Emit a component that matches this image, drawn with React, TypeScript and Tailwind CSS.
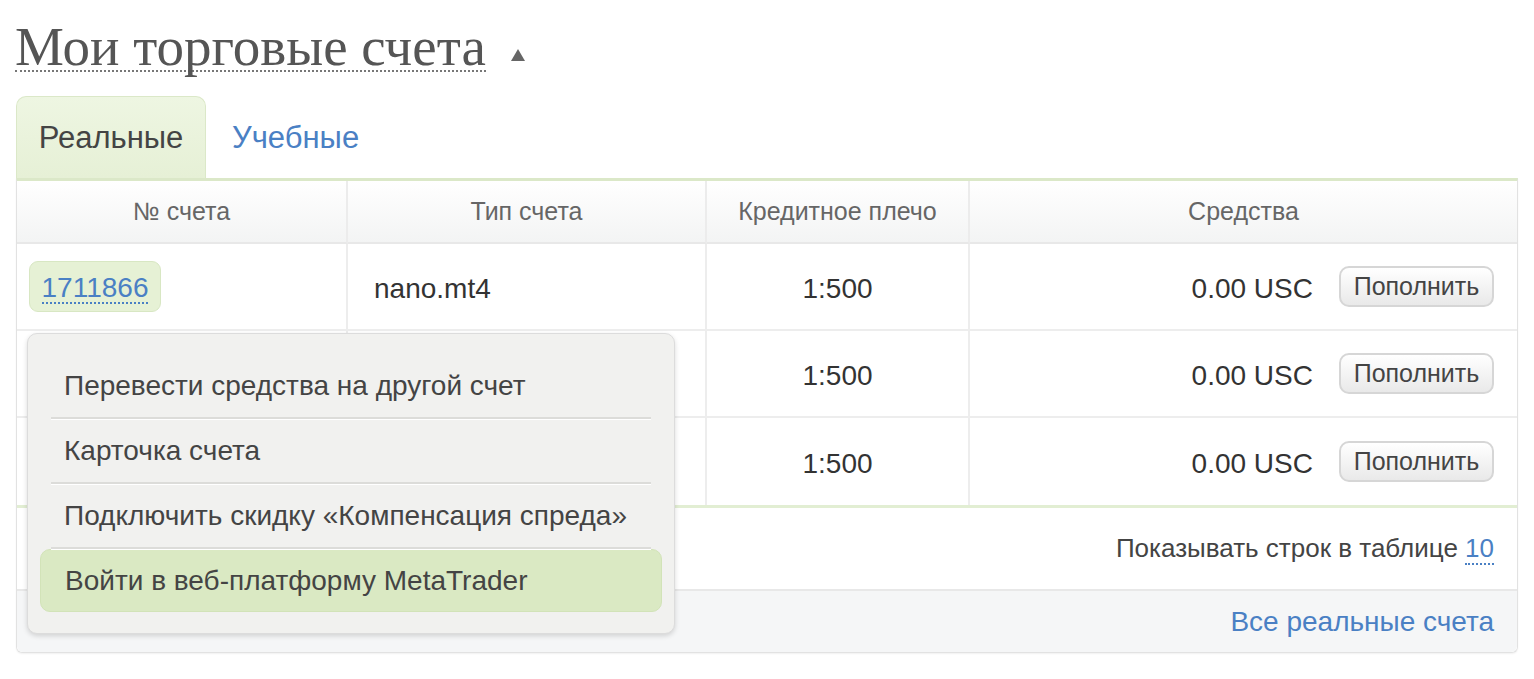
import React from "react";

const rows = [
  { id: "1711866", type: "nano.mt4", lev: "1:500", funds: "0.00 USC" },
  { id: "", type: "", lev: "1:500", funds: "0.00 USC" },
  { id: "", type: "", lev: "1:500", funds: "0.00 USC" },
];

const menu = [
  "Перевести средства на другой счет",
  "Карточка счета",
  "Подключить скидку «Компенсация спреда»",
];

export default function App() {
  return (
    <div className="min-h-screen bg-white px-4 font-['Liberation_Sans',Arial,sans-serif] text-[#444]">
      {/* title */}
      <div className="flex h-[96px] items-start gap-[24px] pt-[24px]">
        <h1 className="ml-[-1px] border-b-2 border-dotted border-[#777] font-['Liberation_Serif','Times_New_Roman',serif] text-[55px] leading-[46px] text-[#555]">
          Мои торговые счета
        </h1>
        <svg className="mt-[24px]" width="16" height="14" viewBox="0 0 16 14">
          <path d="M8 1 L15 13 L1 13 Z" fill="#666" />
        </svg>
      </div>

      {/* tabs */}
      <div className="flex items-end">
        <div className="flex h-[82px] w-[190px] items-center justify-center rounded-t-[10px] border border-b-0 border-[#dbe8c8] bg-gradient-to-b from-[#eef6e2] to-[#e6f0d6] pt-[2px] text-[31px] text-[#444]">
          Реальные
        </div>
        <div className="flex h-[82px] items-center pl-[26px] pt-[2px] text-[31px] text-[#4a80c4]">Учебные</div>
      </div>

      {/* table */}
      <div className="relative rounded-b-[6px] border border-t-[3px] border-[#e2e2e2] border-t-[#dbe8c8] shadow-[0_1px_2px_rgba(0,0,0,0.06)]">
        <div className="grid grid-cols-[331px_359px_263px_1fr]">
          {["№ счета", "Тип счета", "Кредитное плечо", "Средства"].map((h, i) => (
            <div
              key={h}
              className={`flex h-[63px] items-center justify-center border-b-2 border-[#e8e8e8] bg-gradient-to-b from-white to-[#f3f4f4] text-[25px] text-[#666] ${i < 3 ? "border-r-2 border-r-[#ececec]" : ""}`}
            >
              {h}
            </div>
          ))}
          {rows.map((r, ri) => (
            <React.Fragment key={ri}>
              <div className={`flex h-[87px] items-center border-r-2 border-[#ededed] pl-3 ${ri < 2 ? "border-b-2" : ""}`}>
                {r.id && (
                  <span className="flex h-[51px] w-[132px] items-center justify-center rounded-[9px] border border-[#d8e7c3] bg-[#e6f1d5]">
                    <span className="border-b-2 border-dotted border-[#4a80c4] pt-[3px] text-[28px] leading-[29px] text-[#4a80c4]">{r.id}</span>
                  </span>
                )}
              </div>
              <div className={`flex h-[87px] items-center border-r-2 border-[#ededed] pl-[26px] pt-[4px] text-[28px] text-[#333] ${ri < 2 ? "border-b-2" : ""}`}>
                {r.type}
              </div>
              <div className={`flex h-[87px] items-center justify-center border-r-2 border-[#ededed] pt-[4px] text-[28px] text-[#333] ${ri < 2 ? "border-b-2" : ""}`}>
                {r.lev}
              </div>
              <div className={`flex h-[87px] items-center justify-end gap-[26px] border-[#ededed] pr-[23px] text-[28px] text-[#333] ${ri < 2 ? "border-b-2" : ""}`}>
                <span className="pt-[4px]">{r.funds}</span>
                <button className="h-[41px] w-[155px] rounded-[10px] border-2 border-[#d6d6d6] bg-gradient-to-b from-white to-[#e9e9e9] text-[25px] text-[#444]">
                  Пополнить
                </button>
              </div>
            </React.Fragment>
          ))}
        </div>

        <div className="flex h-[86px] items-center justify-end border-t-[3px] border-b-2 border-t-[#e2eed3] border-b-[#e8e8e8] pr-[23px] text-[26px] text-[#444]">
          Показывать строк в таблице&nbsp;
          <span className="border-b-2 border-dotted border-[#4a80c4] leading-[30px] text-[#4a80c4]">10</span>
        </div>
        <div className="flex h-[61px] items-center justify-end rounded-b-[6px] bg-[#f5f6f7] pr-[23px] text-[28px] text-[#4a80c4]">
          Все реальные счета
        </div>

        {/* dropdown */}
        <div className="absolute left-[10px] top-[152px] w-[648px] rounded-[10px] border border-[#dcdcdc] bg-[#f1f1ef] px-3 pt-[20px] pb-[21px] shadow-[0_2px_5px_rgba(0,0,0,0.15)]">
          {menu.map((m) => (
            <div key={m} className="flex h-[65px] flex-col">
              <div className="flex flex-1 items-center px-6 pt-[1px] text-[28px] text-[#444]">{m}</div>
              <div className="mx-[11px] h-[2px] border-t-2 border-[#dcdcd9] shadow-[0_1px_0_#fff]" />
            </div>
          ))}
          <div className="flex h-[63px] items-center rounded-[10px] border border-[#d2e3b8] bg-[#dae9c3] px-6 text-[28px] text-[#444]">
            Войти в веб-платформу MetaTrader
          </div>
        </div>
      </div>
    </div>
  );
}
